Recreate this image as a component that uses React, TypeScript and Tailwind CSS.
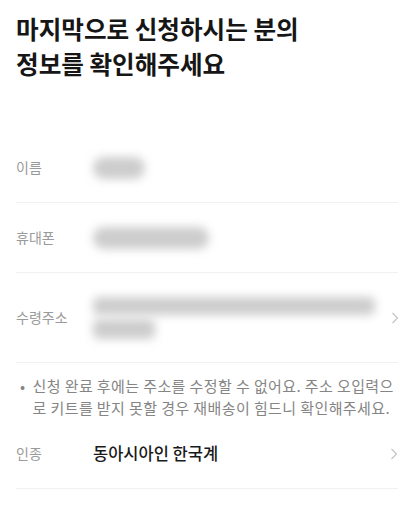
const font = { fontFamily: '"Noto Sans CJK KR", "Noto Sans", sans-serif' };

function Chevron() {
  return (
    <svg width="8" height="12" viewBox="0 0 8 12" fill="none" className="shrink-0">
      <path d="M1.5 1 L6.5 6 L1.5 11" stroke="#c4c4c4" strokeWidth="1.2" />
    </svg>
  );
}

function Blur({ className }: { className: string }) {
  return <div className={`rounded-full bg-[#cdcdcd] blur-[5px] ${className}`} />;
}

function Row({
  label,
  children,
  arrow,
  className = "h-[70px]",
}: {
  label: string;
  children: React.ReactNode;
  arrow?: boolean;
  className?: string;
}) {
  return (
    <div className={`flex items-center border-b border-[#f1f1f1] ${className}`}>
      <span className="w-[77px] shrink-0 text-[14px] text-[#9a9a9a]">{label}</span>
      <div className="flex-1">{children}</div>
      {arrow && <Chevron />}
    </div>
  );
}

export default function App() {
  return (
    <div className="h-[513px] w-[410px] overflow-hidden bg-white pl-4 pr-3 pt-[11px]" style={font}>
      <h1 className="text-[24.6px] font-bold leading-[35px] text-[#161616]">
        마지막으로 신청하시는 분의
        <br />
        정보를 확인해주세요
      </h1>

      <div className="mt-[52px]">
        <Row label="이름">
          <Blur className="h-[22px] w-[52px]" />
        </Row>
        <Row label="휴대폰">
          <Blur className="h-[22px] w-[116px]" />
        </Row>
        <Row label="수령주소" arrow className="h-[90px]">
          <div className="flex flex-col gap-[4px] pr-4">
            <Blur className="h-[18px] w-[282px] rounded-md" />
            <Blur className="h-[20px] w-[62px] rounded-md" />
          </div>
        </Row>

        <div className="flex gap-[7px] pt-[12px] pl-[4px] text-[15px] leading-[22px] tracking-[0.4px] text-[#858585]">
          <span>•</span>
          <p>
            신청 완료 후에는 주소를 수정할 수 없어요. 주소 오입력으로 키트를 받지 못할 경우 재배송이 힘드니
            확인해주세요.
          </p>
        </div>

        <Row label="인종" arrow>
          <span className="text-[16.5px] font-medium text-[#1a1a1a]">동아시아인 한국계</span>
        </Row>
      </div>
    </div>
  );
}
